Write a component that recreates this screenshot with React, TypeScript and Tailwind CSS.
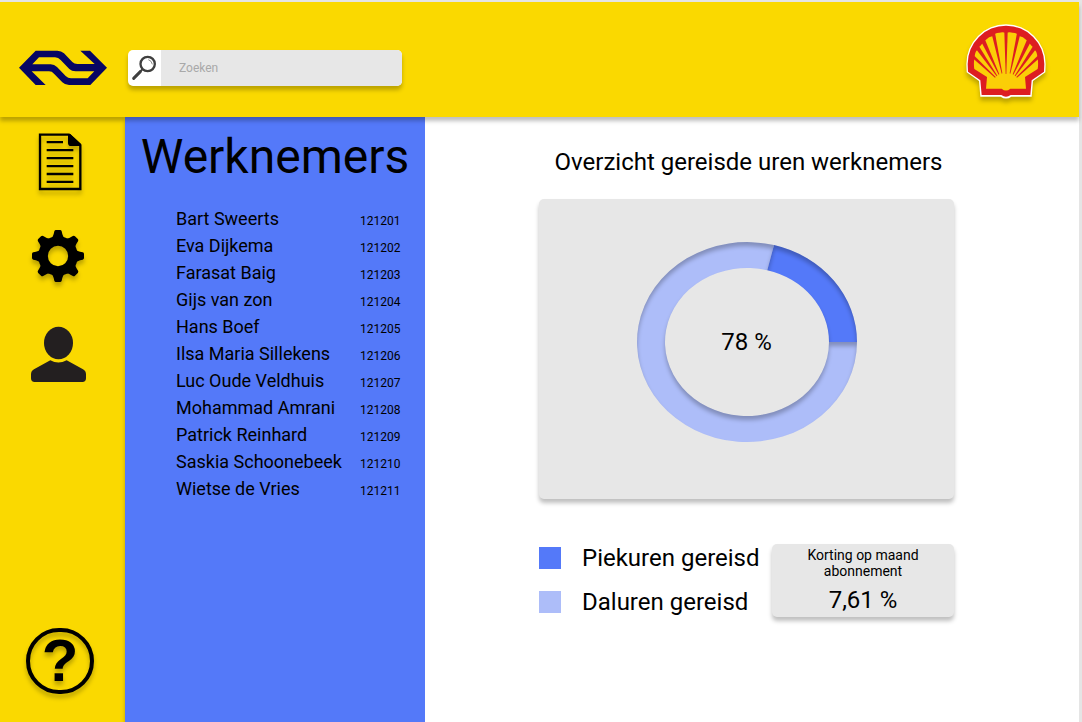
import React from "react";

const employees: [string, string][] = [
  ["Bart Sweerts", "121201"],
  ["Eva Dijkema", "121202"],
  ["Farasat Baig", "121203"],
  ["Gijs van zon", "121204"],
  ["Hans Boef", "121205"],
  ["Ilsa Maria Sillekens", "121206"],
  ["Luc Oude Veldhuis", "121207"],
  ["Mohammad Amrani", "121208"],
  ["Patrick Reinhard", "121209"],
  ["Saskia Schoonebeek", "121210"],
  ["Wietse de Vries", "121211"],
];

function NsLogo() {
  return (
    <svg className="h-9 w-[88px]" viewBox="57 60 264 108" aria-label="NS" role="img">
      <path
        fill="#070663"
        fillRule="evenodd"
        d="M57 113.500 107 62H172Q184 62 192 70L217 96Q223 102 232 102H284L241 62H270L321 113.500 271 165H207Q195 165 187 157L162 131Q156 124 147 124H95L137 165H107ZM97 103H152Q163 103 171 111L197 138Q204 145 213 145H263L283 124H227Q215 124 208 117L182 90Q175 82 165 82H117Z"
      />
    </svg>
  );
}

function SearchGlyph() {
  return (
    <svg className="h-9 w-[33px]" viewBox="0 0 99 108" fill="none" aria-hidden="true">
      <circle cx="59" cy="42" r="21.500" stroke="#3f3f3f" strokeWidth="7" />
      <path d="M61 29Q71 32 73 43" stroke="#888" strokeWidth="3" />
      <path d="M43 58 35 66" stroke="#3f3f3f" strokeWidth="6" />
      <path d="M37 65 17 85" stroke="#3f3f3f" strokeWidth="9" strokeLinecap="round" />
    </svg>
  );
}

function ShellLogo() {
  return (
    <svg
      className="h-[75px] w-20 drop-shadow-[0_4px_2px_rgba(0,0,0,0.25)]"
      viewBox="78 68 240 225"
      aria-label="Shell"
      role="img"
    >
      <path
        fill="#fff"
        d="M79 188A119 119 0 0 1 317 188L316 213 279 239 275 286H214Q198 297 182 286H121L117 239 80 213Z"
      />
      <path
        fill="#dd1d21"
        d="M83 188A115 115 0 0 1 313 188L312 211 275 237 271 281H212Q198 292 184 281H125L121 237 84 211Z"
      />
      <path
        fill="#fbce07"
        d="M138 262 141 227 103 203Q100 185 104 168Q105 151 111 147Q115 137 123 132Q131 118 138 115Q146 106 159 104Q163 95 178 94Q189 91 198 95Q207 91 218 94Q233 95 237 104Q250 106 258 115Q265 118 273 132Q281 137 285 147Q291 151 292 168Q296 185 293 203L255 227 258 262H211Q198 273 185 262Z"
      />
      <g fill="#dd1d21">
        <path d="M193 92H203L199 218H197Z" />
        <path d="M155 98 165 95 187 216 185 217Z" />
        <path d="M241 98 231 95 209 216 211 217Z" />
        <path d="M122 118 133 110 178 219 176 220Z" />
        <path d="M274 118 263 110 218 219 220 220Z" />
        <path d="M104 138 113 128 172 223 170 225Z" />
        <path d="M292 138 283 128 224 223 226 225Z" />
        <path d="M101 173 103 163 167 227 165 229Z" />
        <path d="M295 173 293 163 229 227 231 229Z" />
      </g>
    </svg>
  );
}

function DocumentIcon() {
  return (
    <svg className="h-[60px] w-20" viewBox="60 36 240 180" aria-hidden="true">
      <path d="M120 44H207L241 75V207H120Z" fill="none" stroke="#000" strokeWidth="7" />
      <path d="M204 42H211L243 72V78H213Q204 78 204 68Z" />
      <path
        d="M140 66.500H189M140 90.500H220M140 114.500H220M140 138.500H220M140 162H220M140 185.500H220"
        stroke="#000"
        strokeWidth="7"
      />
    </svg>
  );
}

function GearIcon() {
  return (
    <svg className="h-[60px] w-20" viewBox="60 33 240 180" aria-hidden="true">
      <g>
        {[0, 45, 90, 135, 180, 225, 270, 315].map((angle) => (
          <path
            key={angle}
            d="M152 73Q160 66 163 49Q164 45 168 45H180Q184 45 185 49Q188 66 196 73Z"
            transform={`rotate(${angle} 174 123)`}
          />
        ))}
        <circle cx="174" cy="123" r="45" fill="none" stroke="#000" strokeWidth="29" />
      </g>
    </svg>
  );
}

function PersonIcon() {
  return (
    <svg className="h-[60px] w-20" viewBox="60 327 240 180" fill="#231f20" aria-hidden="true">
      <ellipse cx="175.500" cy="384" rx="43.500" ry="49" />
      <path d="M151 436Q175 449 200 436L249 463Q258 468 258 478V490Q258 501 247 501H104Q93 501 93 490V478Q93 468 102 463Z" />
    </svg>
  );
}

function Donut() {
  return (
    <div className="grid place-items-center">
      <svg
        className="col-start-1 row-start-1 h-[200px] w-[220px]"
        viewBox="0 0 220 200"
        aria-hidden="true"
      >
        <defs>
          <filter id="inset" x="-5%" y="-5%" width="110%" height="110%" colorInterpolationFilters="sRGB">
            <feOffset in="SourceAlpha" dy="4" result="moved" />
            <feGaussianBlur in="moved" stdDeviation="2" result="soft" />
            <feComposite in="SourceAlpha" in2="soft" operator="out" result="edge" />
            <feColorMatrix
              in="edge"
              type="matrix"
              values="0 0 0 0 0  0 0 0 0 0  0 0 0 0 0  0 0 0 0.25 0"
              result="shade"
            />
            <feMerge>
              <feMergeNode in="SourceGraphic" />
              <feMergeNode in="shade" />
            </feMerge>
          </filter>
        </defs>
        <path
          fill="#adbdf9"
          filter="url(#inset)"
          d="M220 100A110 100 0 1 1 137 3.100L130.300 28.300A82 74 0 1 0 192 100Z"
        />
        <path
          fill="#5479f9"
          filter="url(#inset)"
          d="M137 3.100A110 100 0 0 1 220 100H192A82 74 0 0 0 130.300 28.300Z"
        />
      </svg>
      <span className="col-start-1 row-start-1 text-2xl leading-7">78 %</span>
    </div>
  );
}

function Legend({ swatch, label }: { swatch: string; label: string }) {
  return (
    <li className="flex items-center gap-[21px]">
      <span className={`size-[22px] shrink-0 ${swatch}`} />
      <span className="text-2xl leading-7 whitespace-nowrap">{label}</span>
    </li>
  );
}

const iconShadow = "drop-shadow-[0_4px_2px_rgba(0,0,0,0.25)]";

export default function App() {
  return (
    <div className="flex min-h-screen flex-col bg-[#e5e5e5] pt-0.5 pr-[3px] font-[Roboto,sans-serif] text-black">
      <header className="z-10 flex h-[115px] items-center justify-between bg-[#fad900] pr-[33px] pl-[19px] shadow-[0_4px_4px_rgba(0,0,0,0.25)]">
        <div className="flex items-center gap-[21px] pt-4">
          <a href="#home">
            <NsLogo />
          </a>
          <label className="flex h-9 w-[274px] overflow-hidden rounded-[5px] bg-white shadow-[0_4px_4px_rgba(0,0,0,0.25)]">
            <SearchGlyph />
            <input
              type="search"
              aria-label="Zoeken"
              placeholder="Zoeken"
              className="min-w-0 flex-1 bg-[#e7e7e7] px-[18px] text-xs outline-none placeholder:text-[#a9a9a9]"
            />
          </label>
        </div>
        <a href="#shell" className="pt-1">
          <ShellLogo />
        </a>
      </header>

      <div className="flex flex-1">
        <nav className="flex w-[125px] shrink-0 flex-col items-center bg-[#fad900] pt-[15px] pr-[5px] pb-7">
          <button aria-label="Documenten" className={iconShadow}>
            <DocumentIcon />
          </button>
          <button aria-label="Instellingen" className={`mt-[34px] ${iconShadow}`}>
            <GearIcon />
          </button>
          <button aria-label="Profiel" className="mt-[38px]">
            <PersonIcon />
          </button>
          <button
            aria-label="Help"
            className={`mt-auto flex h-[66px] w-[68px] items-center justify-center rounded-full border-4 border-black font-['Liberation_Sans',sans-serif] text-[60px] leading-none font-bold ${iconShadow}`}
          >
            ?
          </button>
        </nav>

        <aside className="w-[300px] shrink-0 bg-[#5479f9] pt-3 shadow-[0_4px_4px_rgba(0,0,0,0.25)]">
          <h1 className="text-center text-5xl leading-[56px]">Werknemers</h1>
          <table className="mt-5 ml-[51px] border-collapse">
            <tbody>
              {employees.map(([name, id]) => (
                <tr key={id} className="h-[27px]">
                  <th scope="row" className="w-[184px] p-0 text-left align-baseline text-lg leading-[27px] font-normal">
                    {name}
                  </th>
                  <td className="p-0 align-baseline text-xs">{id}</td>
                </tr>
              ))}
            </tbody>
          </table>
        </aside>

        <main className="min-w-0 flex-1 bg-white pt-[31px] pr-6 pl-[114px]">
          <div className="max-w-[415px]">
            <h2 className="pl-1 text-center text-2xl leading-7 whitespace-nowrap">
              Overzicht gereisde uren werknemers
            </h2>
            <section className="mt-[23px] rounded-[5px] bg-[#e7e7e7] pt-[43px] pb-[57px] shadow-[0_4px_4px_rgba(0,0,0,0.25)]">
              <Donut />
            </section>
            <div className="mt-[45px] flex items-start justify-between">
              <ul className="flex flex-col gap-4">
                <Legend swatch="bg-[#5479f9]" label="Piekuren gereisd" />
                <Legend swatch="bg-[#adbdf9]" label="Daluren gereisd" />
              </ul>
              <section className="h-[73px] w-[182px] shrink-0 rounded-[5px] bg-[#e7e7e7] px-6 pt-[3px] text-center shadow-[0_4px_4px_rgba(0,0,0,0.25)]">
                <h3 className="text-sm leading-4">Korting op maand abonnement</h3>
                <p className="mt-[7px] text-2xl leading-7">7,61 %</p>
              </section>
            </div>
          </div>
        </main>
      </div>
    </div>
  );
}
